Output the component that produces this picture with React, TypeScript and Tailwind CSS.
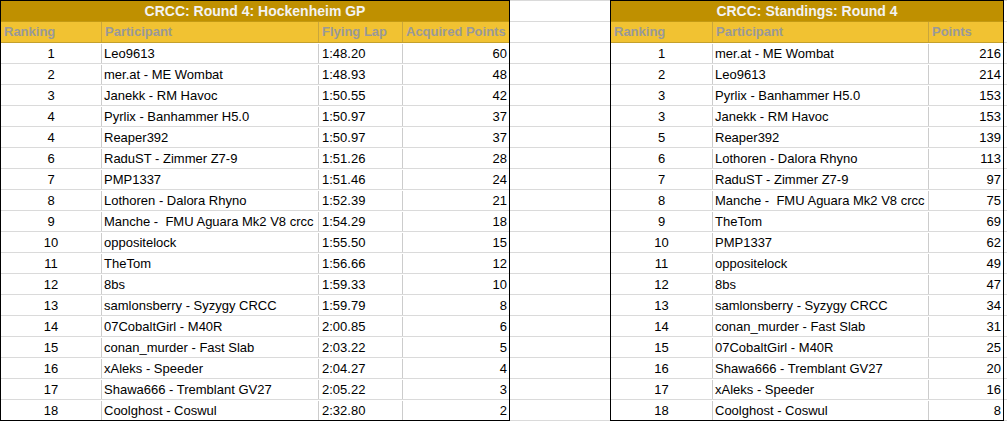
import React from "react";

const left: [string, string, string, string][] = [
  ["1", "Leo9613", "1:48.20", "60"],
  ["2", "mer.at - ME Wombat", "1:48.93", "48"],
  ["3", "Janekk - RM Havoc", "1:50.55", "42"],
  ["4", "Pyrlix - Banhammer H5.0", "1:50.97", "37"],
  ["4", "Reaper392", "1:50.97", "37"],
  ["6", "RaduST - Zimmer Z7-9", "1:51.26", "28"],
  ["7", "PMP1337", "1:51.46", "24"],
  ["8", "Lothoren - Dalora Rhyno", "1:52.39", "21"],
  ["9", "Manche -  FMU Aguara Mk2 V8 crcc", "1:54.29", "18"],
  ["10", "oppositelock", "1:55.50", "15"],
  ["11", "TheTom", "1:56.66", "12"],
  ["12", "8bs", "1:59.33", "10"],
  ["13", "samlonsberry - Syzygy CRCC", "1:59.79", "8"],
  ["14", "07CobaltGirl - M40R", "2:00.85", "6"],
  ["15", "conan_murder - Fast Slab", "2:03.22", "5"],
  ["16", "xAleks - Speeder", "2:04.27", "4"],
  ["17", "Shawa666 - Tremblant GV27", "2:05.22", "3"],
  ["18", "Coolghost - Coswul", "2:32.80", "2"],
];

const right: [string, string, string][] = [
  ["1", "mer.at - ME Wombat", "216"],
  ["2", "Leo9613", "214"],
  ["3", "Pyrlix - Banhammer H5.0", "153"],
  ["3", "Janekk - RM Havoc", "153"],
  ["5", "Reaper392", "139"],
  ["6", "Lothoren - Dalora Rhyno", "113"],
  ["7", "RaduST - Zimmer Z7-9", "97"],
  ["8", "Manche -  FMU Aguara Mk2 V8 crcc", "75"],
  ["9", "TheTom", "69"],
  ["10", "PMP1337", "62"],
  ["11", "oppositelock", "49"],
  ["12", "8bs", "47"],
  ["13", "samlonsberry - Syzygy CRCC", "34"],
  ["14", "conan_murder - Fast Slab", "31"],
  ["15", "07CobaltGirl - M40R", "25"],
  ["16", "Shawa666 - Tremblant GV27", "20"],
  ["17", "xAleks - Speeder", "16"],
  ["18", "Coolghost - Coswul", "8"],
];

const hdrCell =
  "h-full border-r border-[#c9a63c] pl-[3px] font-bold text-[#999999] whitespace-nowrap overflow-hidden";

const titleCls =
  "h-[21px] border-b border-[#c49a14] bg-[#bf9000] text-center font-bold text-[14px] text-[#f3f3f3] leading-[20px]";

function LeftTable() {
  return (
    <div className="w-[510px] h-[421px] border border-black flex flex-col shrink-0">
      <div className={titleCls}>CRCC: Round 4: Hockenheim GP</div>
      <div className="h-[21px] border-b border-[#c4a02c] bg-[#f1c232] flex leading-[20px]">
        <div className={`${hdrCell} w-[101px]`}>Ranking</div>
        <div className={`${hdrCell} w-[217px]`}>Participant</div>
        <div className={`${hdrCell} w-[84px]`}>Flying Lap</div>
        <div className={`${hdrCell} w-[106px] border-r-0`}>Acquired Points</div>
      </div>
      {left.map((r, i) => (
        <div
          key={i}
          className={`flex leading-[20px] pt-[1px] text-black ${
            i === left.length - 1 ? "h-[20px]" : "h-[21px] border-b border-[#dadada]"
          }`}
        >
          <div className="w-[101px] border-r border-[#cccccc] text-center">{r[0]}</div>
          <div className="w-[217px] border-r border-[#cccccc] pl-[2px] whitespace-pre overflow-hidden">
            {r[1]}
          </div>
          <div className="w-[84px] border-r border-[#cccccc] pl-[3px]">{r[2]}</div>
          <div className="w-[106px] text-right pr-[2px]">{r[3]}</div>
        </div>
      ))}
    </div>
  );
}

function RightTable() {
  return (
    <div className="w-[394px] h-[421px] border border-black flex flex-col shrink-0">
      <div className={titleCls}>CRCC: Standings: Round 4</div>
      <div className="h-[21px] border-b border-[#c4a02c] bg-[#f1c232] flex leading-[20px]">
        <div className={`${hdrCell} w-[102px]`}>Ranking</div>
        <div className={`${hdrCell} w-[216px]`}>Participant</div>
        <div className={`${hdrCell} w-[74px] border-r-0`}>Points</div>
      </div>
      {right.map((r, i) => (
        <div
          key={i}
          className={`flex leading-[20px] pt-[1px] text-black ${
            i === right.length - 1 ? "h-[20px]" : "h-[21px] border-b border-[#dadada]"
          }`}
        >
          <div className="w-[102px] border-r border-[#cccccc] text-center">{r[0]}</div>
          <div className="w-[216px] border-r border-[#cccccc] pl-[2px] whitespace-pre overflow-hidden">
            {r[1]}
          </div>
          <div className="w-[74px] text-right pr-[2px]">{r[2]}</div>
        </div>
      ))}
    </div>
  );
}

function Filler({ w }: { w: string }) {
  return (
    <div className={`${w} h-[421px] border-t border-[#dadada] flex flex-col shrink-0`}>
      {Array.from({ length: 20 }).map((_, i) => (
        <div key={i} className="h-[21px] border-b border-[#dadada]" />
      ))}
    </div>
  );
}

export default function App() {
  return (
    <div
      className="w-[1007px] h-[421px] bg-white flex overflow-hidden text-[13px]"
      style={{ fontFamily: '"Liberation Sans", Arial, sans-serif' }}
    >
      <LeftTable />
      <Filler w="w-[100px]" />
      <RightTable />
      <Filler w="w-[3px]" />
    </div>
  );
}
